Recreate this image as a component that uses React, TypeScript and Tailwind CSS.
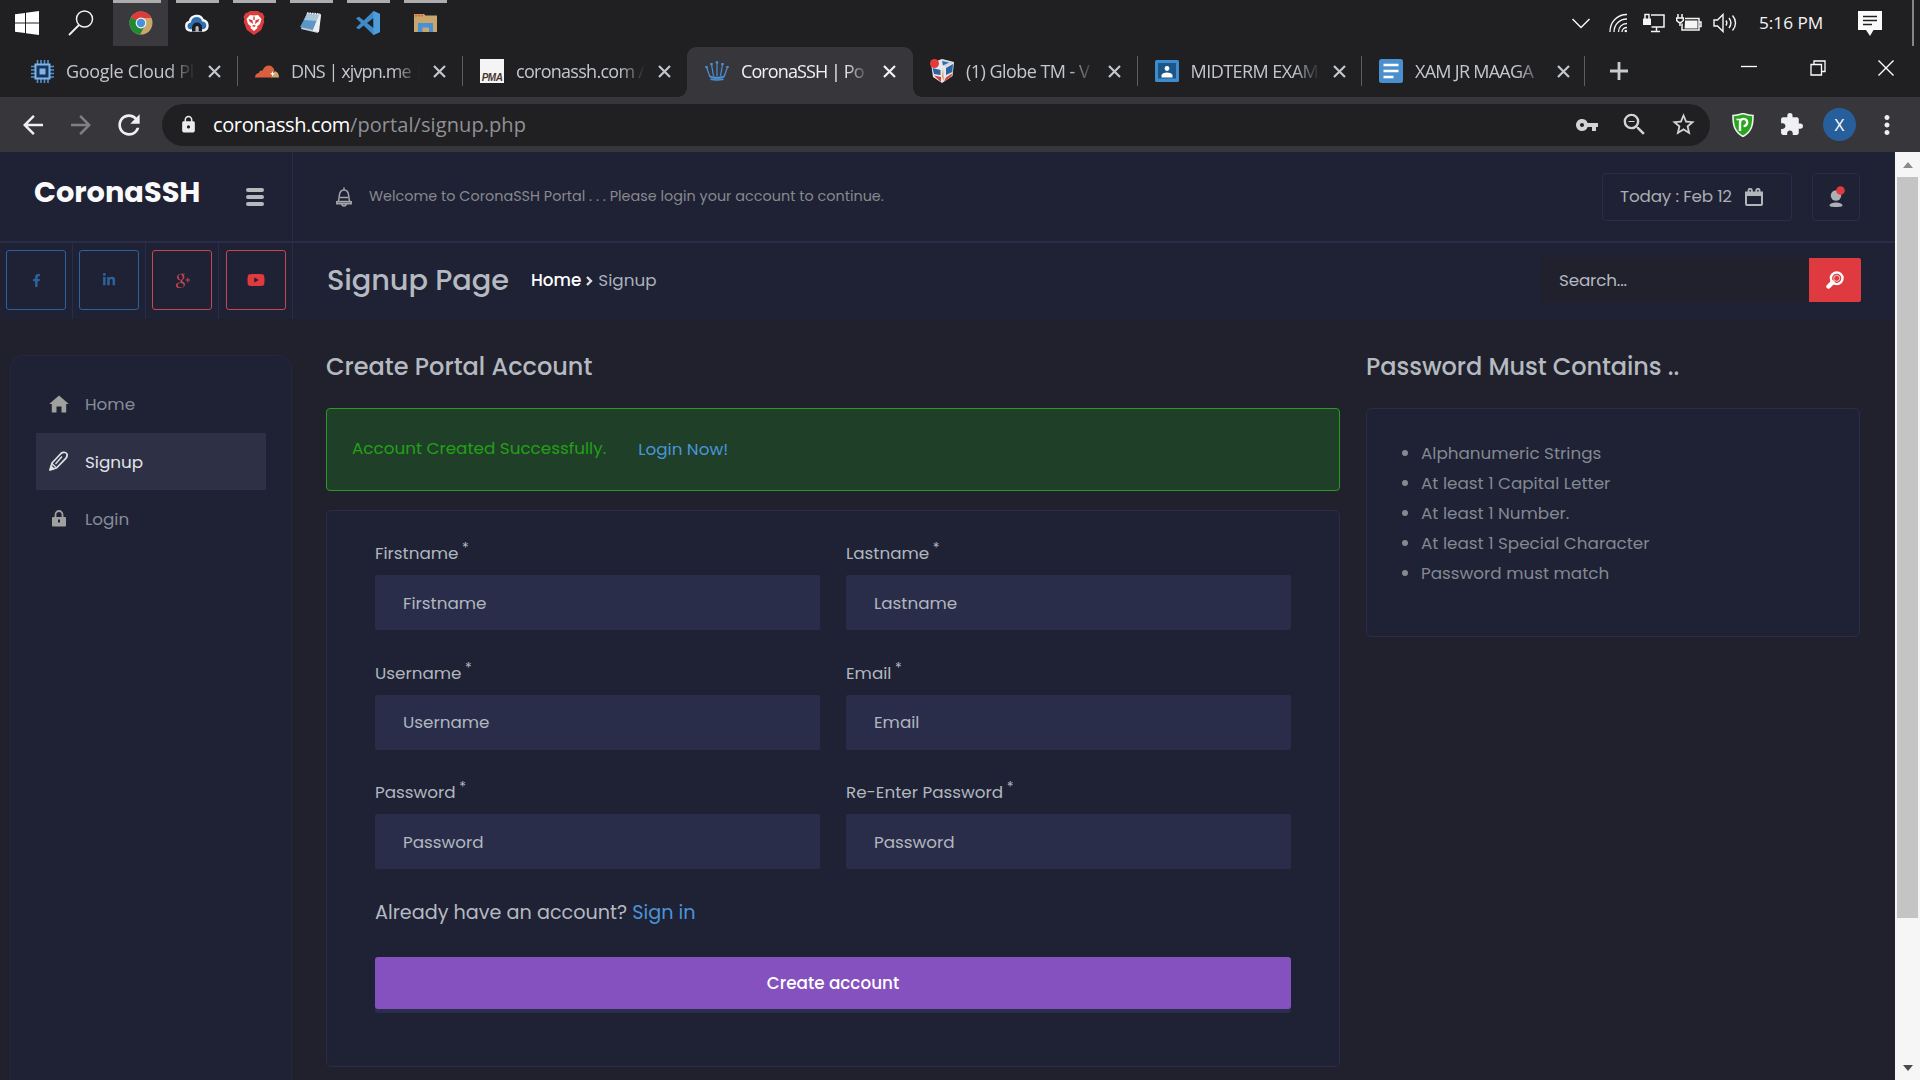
import type { ReactNode } from "react";
import { FaFacebookF, FaLinkedinIn, FaYoutube } from "react-icons/fa";
import { TiSocialGooglePlus } from "react-icons/ti";
import {
  MdArrowBack,
  MdArrowForward,
  MdExtension,
  MdLock,
  MdMoreVert,
  MdRefresh,
  MdStarBorder,
  MdVpnKey,
  MdZoomOut,
} from "react-icons/md";

/* ---------- taskbar icons ---------- */

function WindowsIcon() {
  return (
    <svg width="24" height="24" viewBox="0 0 24 24" fill="#fff">
      <path d="M0 3.3 10 1.9V11.5H0zM11 1.8 24 0V11.5H11zM0 12.5H10V22.1L0 20.7zM11 12.5H24V24L11 22.2z" />
    </svg>
  );
}

function TaskSearchIcon() {
  return (
    <svg width="26" height="26" viewBox="0 0 26 26" fill="none" stroke="#f2f2f2" strokeWidth="1.5">
      <circle cx="16.5" cy="9" r="8" />
      <path d="M11 15 1 25" strokeWidth="1.8" />
    </svg>
  );
}

function ChromeIcon() {
  return (
    <svg width="24" height="24" viewBox="0 0 24 24">
      <circle cx="12" cy="12" r="11.5" fill="#c9a66b" />
      <path d="M12 12 1.9 6.3A11.6 11.6 0 0 1 22.4 7H12z" fill="#de3a3a" />
      <path d="M12 12 1.9 6.3A11.6 11.6 0 0 0 11 23.5l5-9z" fill="#1f8a32" />
      <circle cx="12" cy="12" r="5.4" fill="#f4f4f4" />
      <circle cx="12" cy="12" r="4.2" fill="#4a90d6" />
    </svg>
  );
}

function CloudIcon() {
  return (
    <svg width="24" height="20" viewBox="0 0 24 20">
      <path
        d="M5.5 17.5a4.5 4.5 0 0 1-.6-8.9A6.8 6.8 0 0 1 18 7.3a5.2 5.2 0 0 1 .5 10.2z"
        fill="#2f6fb0"
        stroke="#f5f8fb"
        strokeWidth="2.4"
      />
      <path d="M7 18.5v-4a5 5 0 0 1 10 0v4z" fill="#1c1d22" />
      <path d="M10.5 18v-3.5a1.6 1.6 0 0 1 3.2 0V18l1 .8H9.5z" fill="#b9bcc0" />
    </svg>
  );
}

function BraveIcon() {
  return (
    <svg width="22" height="24" viewBox="0 0 22 24">
      <path d="M5 1.5 7 0h8l2 1.5 2.5.5L21.5 6l-.8 2 .5 3-3 8-7.200 5-7.200-5-3-8 .5-3-.8-2L2.5 2z" fill="#dd3c3c" />
      <path d="m11 4.5 4-.5 3.5 4-1.5 5-3 2.5.5 1.5L11 20l-3.5-3 .5-1.5-3-2.5-1.5-5L7 4z" fill="#fff" />
      <path d="m5.5 8 4 1.2L10 13l-3.5-2.500zM16.5 8l-4 1.200L12 13l3.5-2.500zM9 15l2 1 2-1-2-1.200zM10.300 5.500h1.400V9h-1.400z" fill="#dd3c3c" />
    </svg>
  );
}

function NotebookIcon() {
  return (
    <svg width="24" height="24" viewBox="0 0 24 24">
      <path d="M8 2 22 3 19 22 2 18z" fill="#c6cdd3" />
      <path d="M8 3 20 4 14 19 1 16z" fill="#5d97c6" />
      <path d="M8 3 20 4 17.5 10 5 9z" fill="#a9c7da" />
      <path d="M14 19 20 4l2 0-2 17-6-1z" fill="#eceff1" />
      <path d="M8 2 21 3" stroke="#f2f2f2" strokeWidth="1.5" strokeDasharray="1.5 1" />
    </svg>
  );
}

function VsCodeIcon() {
  return (
    <svg width="24" height="24" viewBox="0 0 24 24">
      <path d="M17.5 0 24 3v18l-6.5 3-9.8-9.5L3 18.2 0 16.700 5 12 0 7.300l3-1.500 4.700 3.700zM17.5 7 11 12l6.500 5z" fill="#3f8bca" fillRule="evenodd" />
      <path d="M17.5 0 24 3v18l-6.5 3z" fill="#4d9ddd" />
    </svg>
  );
}

function ExplorerIcon() {
  return (
    <svg width="23" height="20" viewBox="0 0 23 20">
      <path d="M0 1h10l1.5 1.5H23V19H0z" fill="#c9a66b" />
      <path d="M1 2.5h9" stroke="#d9643c" strokeWidth="2" strokeDasharray="2 1" />
      <path d="M4 10h15v9h-4v-4.5H8.5V19H4z" fill="#4a90d6" />
    </svg>
  );
}

const taskApps: { name: string; icon: ReactNode; active?: boolean }[] = [
  { name: "Chrome", icon: <ChromeIcon />, active: true },
  { name: "Cloud", icon: <CloudIcon /> },
  { name: "Brave", icon: <BraveIcon /> },
  { name: "Notebook", icon: <NotebookIcon /> },
  { name: "Code", icon: <VsCodeIcon /> },
  { name: "Explorer", icon: <ExplorerIcon /> },
];

function Taskbar() {
  return (
    <div className="flex h-[47px] bg-[#202023] text-[#f4f4f4]">
      <div className="flex w-[54px] justify-center pt-[11px]">
        <WindowsIcon />
      </div>
      <div className="flex w-[53px] justify-center pt-[10px]">
        <TaskSearchIcon />
      </div>
      <div className="flex gap-0.5 pl-[6px]">
        {taskApps.map((app) => (
          <div key={app.name} title={app.name} className={`h-[46px] w-[55px] ${app.active ? "bg-[#3a3a3e]" : ""}`}>
            <div className={`h-[3px] bg-[#adadb0] ${app.active ? "w-[48px]" : "ml-[6px] w-[43px]"}`} />
            <div className={`flex h-[40px] items-center justify-center ${app.active ? "" : "pr-px"}`}>{app.icon}</div>
          </div>
        ))}
      </div>

      <div className="ml-auto flex h-[46px] items-center">
        <svg width="18" height="11" viewBox="0 0 18 11" fill="none" stroke="currentColor" strokeWidth="1.5">
          <path d="m.5 1 8.5 8.5L17.5 1" />
        </svg>
        <svg className="ml-[19px]" width="19" height="20" viewBox="0 0 19 20" fill="none" stroke="currentColor" strokeWidth="1.3">
          <path d="M1 19C1 9 8 1.5 18 1.5M5 19C5 11.5 10.5 6 18 6M9.5 19c0-5 3.5-8.5 8.5-8.5M13 19c0-2.5 2-4.5 5-4.5" />
          <circle cx="16.8" cy="18" r="1.3" fill="currentColor" stroke="none" />
        </svg>
        <svg className="ml-[15px]" width="22" height="20" viewBox="0 0 22 20" fill="none" stroke="currentColor" strokeWidth="1.5">
          <path d="M8 2h13v12H8.5M13.5 14v4M8 18.5h9" />
          <path d="M2 6V1.5h4V6" />
          <path d="M0 5.5h8V12H0z" fill="currentColor" stroke="none" />
        </svg>
        <svg className="ml-[11px]" width="26" height="18" viewBox="0 0 26 18" fill="none" stroke="currentColor" strokeWidth="1.5">
          <path d="M6 9.5V16h17V4.5H9M23.5 8h1.5v4.5h-1.5" />
          <path d="M9 6.5h12.5v8H8.5z" fill="currentColor" stroke="none" />
          <path d="M2 0v4M6 0v4M.7 4h6.600v2.500L5 8.500H3L.7 6.500zM4 8.500V12" />
        </svg>
        <svg className="ml-[11px]" width="24" height="20" viewBox="0 0 24 20" fill="none" stroke="currentColor" strokeWidth="1.4">
          <path d="M1 7h3.5L10 1.5v17L4.5 13H1z" />
          <path d="M13 7.5c1 1.5 1 3.5 0 5M16 5c2.3 3 2.3 7 0 10M19.5 2.5c4 4.5 4 10.5 0 15" />
        </svg>
        <span className="ml-[22px] w-[65px] text-[17.2px] whitespace-nowrap">5:16 PM</span>
        <svg className="ml-[34px]" width="24" height="25" viewBox="0 0 24 25">
          <path d="M0 0h24v19h-8.5L12 25l-4-6H0z" fill="#fafafa" />
          <path d="M5 5.5h14M5 9.5h14M5 13.5h9" stroke="#202023" strokeWidth="1.5" />
        </svg>
        <div className="mr-[6px] ml-[30px] h-[46px] w-0.5 bg-[#85858a]" />
      </div>
    </div>
  );
}

/* ---------- browser tabs ---------- */

function ChipFavicon() {
  return (
    <svg width="23" height="23" viewBox="0 0 23 23">
      <path
        d="M6.5 0v4M10 0v4M13.5 0v4M17 0v4M6.5 19v4M10 19v4M13.5 19v4M17 19v4M0 6.5h4M0 10h4M0 13.5h4M0 17h4M19 6.5h4M19 10h4M19 13.5h4M19 17h4"
        stroke="#4f93d4"
        strokeWidth="1.6"
      />
      <path d="M4.5 4.5h14v14h-14z" fill="#18345a" stroke="#7fb4e6" strokeWidth="2" />
      <path d="M8.5 8.5h6v6h-6z" fill="#7fb4e6" />
    </svg>
  );
}

function CloudflareFavicon() {
  return (
    <svg width="24" height="13" viewBox="0 0 24 13">
      <path d="M16 12.5c.5-4 3-6.5 5-6 1.5.5 3 3 3 6z" fill="#c9a66b" />
      <path d="M0 12.5C0 9.5 2 8 4 8c0-2 2-3 3.5-2.3C9 2 11 .5 14 .5c3 .2 5.5 3 5.5 6L17 8l1 1.5-1.5 3z" fill="#d9603f" />
      <path d="m17.5 6 .7 2 1.8.8-1.8.7-.7 2-.7-2-1.8-.7 1.8-.8z" fill="#fff" />
    </svg>
  );
}

function PmaFavicon() {
  return (
    <div className="flex size-6 items-end justify-center bg-[#f4f4f4] font-['Liberation_Sans',sans-serif] text-[10px] leading-[10px] font-bold tracking-tighter text-[#49372f] italic">
      PMA
    </div>
  );
}

function CrownFavicon() {
  return (
    <svg width="24" height="20" viewBox="0 0 24 20" fill="none" stroke="#4a90d6">
      <path d="M5 16 1.5 6M8.5 15 6.5 3.5M12 15V2M15.5 15l2-11.500M19 16l3.500-10" strokeWidth="1.2" />
      <path d="M4 13.5 5.500 17c4 1.200 9 1.200 13 0l1.500-3.500-2 1.500c-4 1-8 1-12 0z" fill="#4a90d6" stroke="none" />
      <path d="M5.500 18.300c4 1 9 1 13 0" strokeWidth="1.500" />
      <path d="M.3 6h2.400M5.300 3.200h2.400M10.800 1.300h2.400M16.300 3.200h2.400M21.300 6h2.400" strokeWidth="2.2" />
    </svg>
  );
}

function CubeFavicon() {
  return (
    <svg width="24" height="24" viewBox="0 0 24 24">
      <path d="M1 4 12 0l12 3-1.5 14L12 24 3 18z" fill="#e8e8e8" />
      <path d="m12 1 11 2.5-8 5z" fill="#c9d7e6" />
      <path d="m12 2 7 1.5-6 3z" fill="#2f6fb0" />
      <path d="m2.5 9 8 2v5L4 15zM23 5l-.7 8-6.3 3V9z" fill="#2b62a0" />
      <path d="m4 16.5 7 1.5v5zM22 14.5l-6 4-2 4 7.5-5.5z" fill="#d63a3a" />
      <path d="m13 9 1 13-2-4z" fill="#c9a66b" />
      <circle cx="4.5" cy="4.5" r="4.5" fill="#e33b3b" />
    </svg>
  );
}

function ClassroomFavicon() {
  return (
    <svg width="24" height="22" viewBox="0 0 24 22">
      <rect width="24" height="22" rx="1.5" fill="#3f8bcf" />
      <rect x="3" y="3" width="18" height="15.5" fill="#1c5688" />
      <circle cx="12" cy="8.5" r="2.4" fill="#fff" />
      <path d="M6.5 17.5V15c1-2 3.5-2.6 5.5-2.6s4.5.6 5.5 2.6v2.5z" fill="#fff" />
    </svg>
  );
}

function DocFavicon() {
  return (
    <svg width="24" height="24" viewBox="0 0 24 24">
      <rect width="24" height="24" rx="2.5" fill="#4a90cf" />
      <path d="M4.5 6h15M4.5 12h15M4.5 18h10" stroke="#fff" strokeWidth="2.6" />
    </svg>
  );
}

type Tab = { title: string; icon: ReactNode; box: string; tracking: string; active?: boolean; noDivider?: boolean };

const tabs: Tab[] = [
  { title: "Google Cloud Pl", icon: <ChipFavicon />, box: "w-[225px] pl-[17px]", tracking: "tracking-[-0.017em]" },
  { title: "DNS | xjvpn.me |", icon: <CloudflareFavicon />, box: "w-[224.5px] pl-[17px]", tracking: "tracking-[-0.05em]" },
  { title: "coronassh.com /", icon: <PmaFavicon />, box: "w-[224.5px] pl-[17.5px]", tracking: "tracking-[-0.04em]", noDivider: true },
  { title: "CoronaSSH | Po", icon: <CrownFavicon />, box: "w-[226px] pl-[18px]", tracking: "tracking-[-0.05em]", active: true, noDivider: true },
  { title: "(1) Globe TM - V", icon: <CubeFavicon />, box: "w-[224.5px] pl-[17px]", tracking: "tracking-[-0.03em]" },
  { title: "MIDTERM EXAM", icon: <ClassroomFavicon />, box: "w-[224.5px] pl-[17px]", tracking: "tracking-[-0.03em]" },
  { title: "XAM JR MAAGA", icon: <DocFavicon />, box: "w-[222.5px] pl-[17px]", tracking: "tracking-[-0.04em]" },
];

function BrowserTab({ tab }: { tab: Tab }) {
  return (
    <div
      className={`relative flex shrink-0 items-center pb-0.5 ${tab.box} ${
        tab.active
          ? "rounded-t-[9px] bg-[#37373b] text-[#f0f1f3] before:absolute before:bottom-0 before:-left-[9px] before:size-[9px] before:bg-[radial-gradient(circle_at_0_0,transparent_8.5px,#37373b_9px)] after:absolute after:-right-[9px] after:bottom-0 after:size-[9px] after:bg-[radial-gradient(circle_at_100%_0,transparent_8.5px,#37373b_9px)]"
          : "text-[#c3c7cb]"
      }`}
    >
      <div className="flex w-6 justify-center">{tab.icon}</div>
      <div
        className={`ml-3 w-[129px] text-[18px] leading-6 whitespace-nowrap [mask-image:linear-gradient(to_right,#000_80%,transparent)] ${tab.tracking}`}
      >
        {tab.title}
      </div>
      <svg className="ml-[13px]" width="13" height="13" viewBox="0 0 13 13" stroke="currentColor" strokeWidth="2.2">
        <path d="m1 1 11 11M12 1 1 12" />
      </svg>
      {!tab.noDivider && <div className="ml-auto h-[30px] w-px bg-[#5c5c61]" />}
    </div>
  );
}

function TabStrip() {
  return (
    <div className="flex h-[50px] bg-[#202023] pl-[13px]">
      {tabs.map((tab) => (
        <BrowserTab key={tab.title} tab={tab} />
      ))}
      <svg className="mt-[15px] ml-[25px]" width="18" height="18" viewBox="0 0 18 18" stroke="#c8cacc" strokeWidth="2.8">
        <path d="M9 0v18M0 9h18" />
      </svg>
      <div className="mr-[26px] ml-auto flex items-start gap-[52.5px] pt-[13px] text-white">
        <svg width="16" height="16" viewBox="0 0 16 16" stroke="currentColor" strokeWidth="1.3">
          <path d="M0 6.5h16" />
        </svg>
        <svg width="16" height="16" viewBox="0 0 16 16" fill="none" stroke="currentColor" strokeWidth="1.3">
          <path d="M1 4.5h10.5V15H1zM4 4.5V1h11v10.5h-3.5" />
        </svg>
        <svg width="16" height="16" viewBox="0 0 16 16" stroke="currentColor" strokeWidth="1.4">
          <path d="m.5.5 15 15M15.5.5l-15 15" />
        </svg>
      </div>
    </div>
  );
}

function AddressBar() {
  return (
    <div className="flex h-[55px] items-center bg-[#37373b] text-[#eff0f1]">
      <MdArrowBack className="ml-[18px]" size={30} />
      <MdArrowForward className="ml-[18px] text-[#808084]" size={30} />
      <MdRefresh className="ml-[17px]" size={32} />
      <div className="ml-[17px] flex h-[42px] w-[1548px] items-center rounded-full bg-[#202023] text-[#d2d3d5]">
        <MdLock className="ml-[17px] text-[#ececee]" size={19} />
        <span className="ml-[15px] text-[20px] leading-6 tracking-[-0.019em] text-white">coronassh.com</span>
        <span className="text-[20px] leading-6 tracking-[0.004em] text-[#909196]">/portal/signup.php</span>
        <MdVpnKey className="ml-auto" size={24} />
        <MdZoomOut className="ml-[21px]" size={29} />
        <MdStarBorder className="mr-[13px] ml-[21px]" size={27} />
      </div>
      <svg className="ml-[22px]" width="22" height="24" viewBox="0 0 22 24">
        <path d="M1 2.5C5 2.5 8 1.5 11 .5c3 1 6 2 10 2 0 9-1 16-10 21C2 18.5 1 11.5 1 2.5z" fill="#27a51b" stroke="#f1f1f1" strokeWidth="1.6" />
        <path d="M8 18V9.500a3.600 3.600 0 1 1 3.600 3.600" fill="none" stroke="#fff" strokeWidth="2.4" />
        <path d="M4.500 6.500h4" stroke="#fff" strokeWidth="1.600" />
      </svg>
      <MdExtension className="ml-[25px]" size={25} />
      <div className="ml-[19px] flex size-[33px] items-center justify-center rounded-full bg-[#265f9b] text-[17px] text-white">
        X
      </div>
      <MdMoreVert className="ml-[16px]" size={30} />
    </div>
  );
}

/* ---------- portal page ---------- */

function BellIcon() {
  return (
    <svg width="16" height="20" viewBox="0 0 16 20" fill="none" stroke="#a3a5a8" strokeWidth="1.5">
      <path d="M2 14.5c1.2-1.5 1-3.5 1.3-6C3.7 5 5.5 3 8 3s4.3 2 4.700 5.500c.3 2.500.1 4.500 1.300 6zM8 .5V3M4 10.500h8" />
      <path d="M.8 14.7h14.4v2H.8zM5.5 17c.5 1.5 1.3 2 2.500 2s2-.5 2.500-2" />
    </svg>
  );
}

function CalendarIcon() {
  return (
    <svg width="18" height="18" viewBox="0 0 18 18" fill="none" stroke="#b3b5b9" strokeWidth="2">
      <path d="M1 4.5h16V16a1 1 0 0 1-1 1H2a1 1 0 0 1-1-1z" />
      <path d="M1 4h16v4H1z" fill="#b3b5b9" stroke="none" />
      <path d="M3.5 5V2.5a1.7 1.7 0 0 1 3.4 0V5M11.2 5V2.5a1.7 1.7 0 0 1 3.4 0V5" strokeWidth="1.8" />
    </svg>
  );
}

function SignupIcon() {
  return (
    <svg width="20" height="20" viewBox="0 0 20 20" fill="none" stroke="#dfe0e3" strokeWidth="1.8" strokeLinejoin="round">
      <path d="M1.5 18.5 3 12 12 2.5c2-2 7-1.5 6 2.5-.2 1-.6 1.7-1.2 2.3L7.5 17z" />
      <path d="M6.500 13 13 5.500" strokeWidth="1.4" />
      <path d="M3 12.500l4 4" strokeWidth="1.3" />
      <path d="m1 19 1-3.5 2.5 2.5z" fill="#dfe0e3" />
    </svg>
  );
}

function HomeIcon() {
  return (
    <svg width="20" height="18" viewBox="0 0 20 18" fill="#a0a19f">
      <path d="M10 .5 19.8 9h-2.6v8.5H12.5V11.5h-5v6H2.8V9H.2z" />
    </svg>
  );
}

function LoginIcon() {
  return (
    <svg width="14" height="17" viewBox="0 0 14 17">
      <path d="M3.5 8V4.5a3.5 3.5 0 0 1 7 0V8" fill="none" stroke="#a0a19f" strokeWidth="1.8" />
      <rect y="7" width="14" height="9.5" rx="1" fill="#a0a19f" />
      <path d="M7 9.5v3" stroke="#1f2135" strokeWidth="2" />
    </svg>
  );
}

function PortalHeader() {
  return (
    <header className="flex h-[91px] border-b-2 border-[#2a2c49] bg-[#1f2135]">
      <div className="flex w-[293px] items-center border-r border-[#2a2c49] pl-[34px]">
        <span className="w-[212px] pb-[9px] text-[28.8px] leading-8 font-bold text-[#fafafb]">CoronaSSH</span>
        <div className="flex flex-col gap-[3px]">
          <div className="h-1 w-[18px] rounded-sm bg-[#b8b9bf]" />
          <div className="h-1 w-[18px] rounded-sm bg-[#b8b9bf]" />
          <div className="h-1 w-[18px] rounded-sm bg-[#b8b9bf]" />
        </div>
      </div>
      <div className="flex flex-1 items-center pr-[35px] pl-[43px]">
        <BellIcon />
        <span className="ml-[17px] text-[14.4px] text-[#87898d]">
          Welcome to CoronaSSH Portal . . . Please login your account to continue.
        </span>
        <div className="ml-auto flex h-[48px] w-[190px] items-center gap-[12px] rounded border border-[#2a2c49] pl-[17px]">
          <span className="w-[113px] text-[16.8px] tracking-[-0.01em] whitespace-nowrap text-[#abadb1]">Today : Feb 12</span>
          <CalendarIcon />
        </div>
        <div className="ml-[20px] flex size-[48px] items-center justify-center rounded border border-[#2a2c49]">
          <svg className="ml-[2px]" width="16" height="22" viewBox="0 0 16 22" fill="#aeb0b5">
            <circle cx="7" cy="9.5" r="5.2" />
            <path d="M.5 19.5c.5-4 12.5-4 13 0 0 2-13 2-13 0z" />
            <circle cx="11.5" cy="4.5" r="4.3" fill="#e0393e" />
          </svg>
        </div>
      </div>
    </header>
  );
}

const socials = [
  { name: "Facebook", color: "border-[#2c639b] text-[#2c639b]", icon: <FaFacebookF size={13} /> },
  { name: "LinkedIn", color: "border-[#2c639b] text-[#2c639b]", icon: <FaLinkedinIn size={14} /> },
  { name: "Google Plus", color: "border-[#c5474f] text-[#c5474f]", icon: <TiSocialGooglePlus size={23} /> },
  { name: "YouTube", color: "border-[#c5474f] text-[#e0393e]", icon: <FaYoutube size={18} /> },
];

function TitleBar() {
  return (
    <div className="flex h-[76px] bg-[#1f2135]">
      <div className="grid w-[293px] grid-cols-[73px_73px_73px_74px]">
        {socials.map((s) => (
          <div key={s.name} className="flex justify-center border-r border-[#2a2c49] pt-[7px]">
            <a href="#" aria-label={s.name} className={`flex size-[60px] items-center justify-center rounded-[3px] border ${s.color}`}>
              {s.icon}
            </a>
          </div>
        ))}
      </div>
      <div className="flex flex-1 items-center pr-[34px] pb-[2px] pl-[34px]">
        <h1 className="w-[204px] pt-[1px] text-[28.8px] font-medium tracking-[-0.003em] whitespace-nowrap text-[#b5bac0]">Signup Page</h1>
        <span className="pt-[1px] text-[16.8px] font-medium text-white">Home</span>
        <svg className="mx-[5px] mt-[1px]" width="7" height="10" viewBox="0 0 7 10" fill="none" stroke="#dcdfe3" strokeWidth="2.4">
          <path d="m1 1 4 4-4 4" />
        </svg>
        <span className="pt-[1px] text-[16.8px] text-[#aab2bb]">Signup</span>
        <div className="ml-auto flex h-[44px]">
          <input
            placeholder="Search..."
            className="w-[268px] bg-[#20212c] pt-[2px] pl-[18px] text-[16.8px] tracking-[-0.01em] outline-none placeholder:text-[#b3b9c0]"
          />
          <button className="flex w-[52px] items-center justify-center rounded-r-[2px] bg-[#de3a3f]" aria-label="Search">
            <svg width="18" height="18" viewBox="0 0 18 18" fill="none">
              <circle cx="10.7" cy="7.3" r="5.8" stroke="#fff" strokeWidth="2.4" />
              <circle cx="10.7" cy="7.3" r="3" stroke="#f6cfd0" strokeWidth="1" />
              <path d="m6.500 11.500-4 4" stroke="#fff" strokeWidth="4.5" strokeLinecap="round" />
            </svg>
          </button>
        </div>
      </div>
    </div>
  );
}

const menu = [
  { label: "Home", icon: <HomeIcon /> },
  { label: "Signup", icon: <SignupIcon />, active: true },
  { label: "Login", icon: <LoginIcon /> },
];

function Sidebar() {
  return (
    <aside className="mt-[36px] ml-[10px] w-[282px] rounded-t-[14px] border border-b-0 border-[#25273e] bg-[#1f2135] px-[25px] pt-[19px]">
      {menu.map((m) => (
        <a
          key={m.label}
          href="#"
          className={`flex h-[57.5px] items-center pl-[13px] text-[16.8px] ${
            m.active ? "bg-[#2e3045] text-[#e2e4e7]" : "text-[#858d96]"
          }`}
        >
          <span className="flex w-5 justify-center">{m.icon}</span>
          <span className="ml-[16px] pt-[2px]">{m.label}</span>
        </a>
      ))}
    </aside>
  );
}

const fields = [
  { label: "Firstname", placeholder: "Firstname", type: "text" },
  { label: "Lastname", placeholder: "Lastname", type: "text" },
  { label: "Username", placeholder: "Username", type: "text" },
  { label: "Email", placeholder: "Email", type: "email" },
  { label: "Password", placeholder: "Password", type: "password" },
  { label: "Re-Enter Password", placeholder: "Password", type: "password" },
];

function SignupForm() {
  return (
    <form className="mt-[19px] h-[557px] rounded-[5px] border border-[#2a2c49] bg-[#1f2135] px-[48px] pt-[29px]">
      <div className="grid grid-cols-2 gap-x-[26px] gap-y-[29.5px]">
        {fields.map((f) => (
          <label key={f.label} className="flex flex-col gap-[9px] text-[16.8px] text-[#b0b7be]">
            <span className="h-[26px] leading-[26px]">
              {f.label} <sup className="-top-[0.4em] -ml-px text-[14px]">*</sup>
            </span>
            <input
              type={f.type}
              placeholder={f.placeholder}
              className="h-[55px] w-full rounded-[2px] bg-[#2a2d4a] px-[28px] outline-none placeholder:text-[#b0b7be]"
            />
          </label>
        ))}
      </div>
      <p className="mt-[29px] text-[19.2px] leading-[30px] text-[#b5bac0]">
        Already have an account?{" "}
        <a href="#" className="text-[#4a94d8]">
          Sign in
        </a>
      </p>
      <button
        type="button"
        className="mt-[29px] block h-[52px] w-full rounded-[3px] bg-[#8551bf] pt-[1px] text-[16.8px] font-medium text-white shadow-[0_4px_1px_#2b2e4e]"
      >
        Create account
      </button>
    </form>
  );
}

const passwordRules = [
  "Alphanumeric Strings",
  "At least 1 Capital Letter",
  "At least 1 Number.",
  "At least 1 Special Character",
  "Password must match",
];

function Scrollbar() {
  return (
    <div className="flex w-[25px] flex-col items-center justify-between bg-[#f6f6f6]">
      <div className="flex h-[25px] items-center">
        <svg width="10" height="6" viewBox="0 0 10 6" fill="#8b8b8b">
          <path d="M5 0l5 6H0z" />
        </svg>
      </div>
      <div className="mb-auto h-[741px] w-[21px] bg-[#c4c4c4]" />
      <div className="flex h-[25px] items-center">
        <svg width="10" height="6" viewBox="0 0 10 6" fill="#4c4c4c">
          <path d="M5 6l5-6H0z" />
        </svg>
      </div>
    </div>
  );
}

export default function App() {
  return (
    <div className="flex h-[1080px] w-[1920px] flex-col overflow-hidden bg-[#20212c] font-['Open_Sans',sans-serif]">
      <Taskbar />
      <TabStrip />
      <AddressBar />
      <div className="flex min-h-0 flex-1">
        <div className="flex flex-1 flex-col font-['Poppins','Inter',sans-serif]">
          <PortalHeader />
          <TitleBar />
          <div className="flex min-h-0 flex-1">
            <Sidebar />
            <main className="ml-[34px] w-[1014px]">
              <h2 className="mt-[32px] text-[24px] leading-8 font-medium text-[#b5bac0]">Create Portal Account</h2>
              <div className="mt-[25px] flex h-[83px] items-center rounded-[4px] border border-[#2a9a22] bg-[#1f3f29] pb-px pl-[25px] text-[16.8px]">
                <span className="text-[#23a017]">Account Created Successfully.</span>
                <a href="#" className="ml-[32px] pt-0.5 text-[#4a94d8]">
                  Login Now!
                </a>
              </div>
              <SignupForm />
            </main>
            <section className="ml-[26px] w-[494px]">
              <h2 className="mt-[32px] text-[24px] leading-8 font-medium tracking-[-0.003em] text-[#b5bac0]">Password Must Contains ..</h2>
              <ul className="mt-[25px] h-[229px] list-disc rounded-[5px] border border-[#2a2c49] bg-[#1f2135] pt-[29px] pl-[54px] text-[16.8px] leading-[30px] text-[#838990]">
                {passwordRules.map((rule) => (
                  <li key={rule}>{rule}</li>
                ))}
              </ul>
            </section>
          </div>
        </div>
        <Scrollbar />
      </div>
    </div>
  );
}
